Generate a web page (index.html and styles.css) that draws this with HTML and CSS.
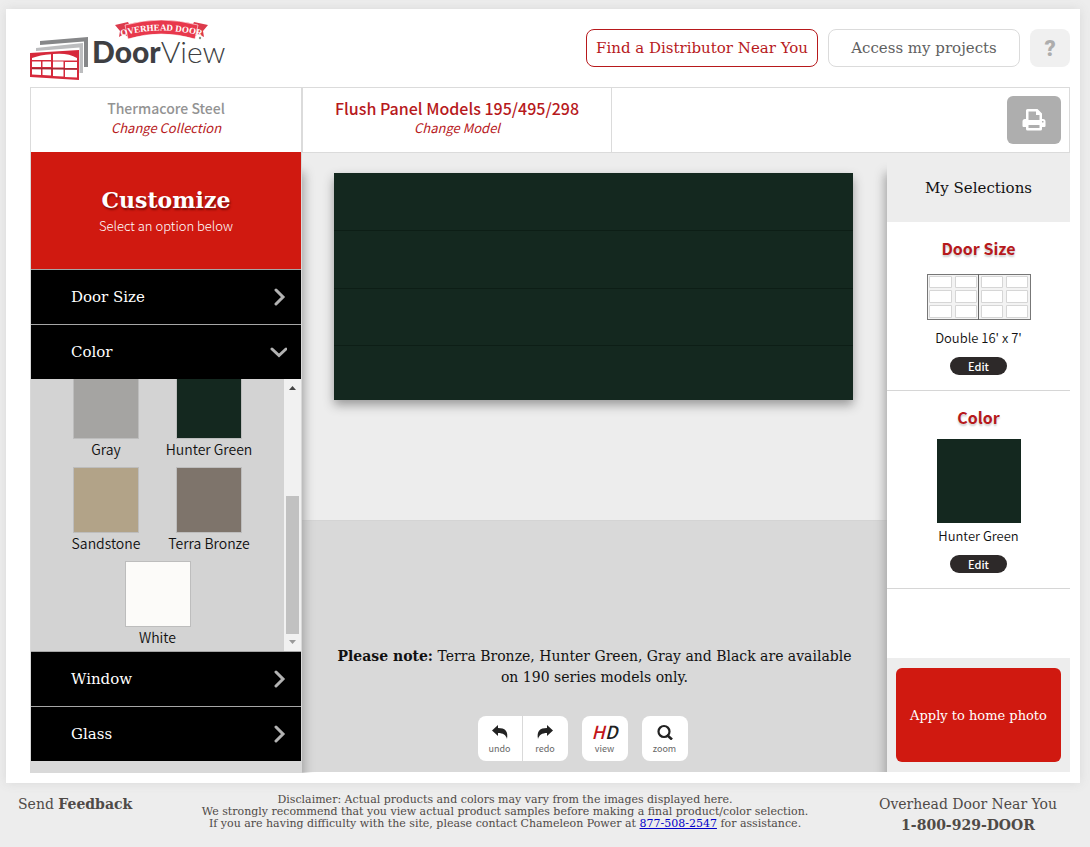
FILE: index.html
```html
<!DOCTYPE html>
<html lang="en">
<head>
<meta charset="utf-8">
<title>DoorView</title>
<link rel="stylesheet" href="styles.css">
</head>
<body>
<div class="shell">
  <header class="header">
    <svg class="logo" width="196" height="64" viewBox="0 0 196 64" role="img" aria-label="Overhead Door DoorView">
      <path d="M10 24 L58 20 V50 H54 V24.500 L10 28Z" fill="#868789"/>
      <path d="M6 31 L53 26 V56 H49.500 V30.500 L6 34Z" fill="#bcbdbf"/>
      <path d="M0 36 L49 33 V63 L0 60Z" fill="#d6293b"/>
      <path d="M2 41 Q10 38 21 37.200 V43 H2Z M23 37 Q38 35.500 47 41 V43.500 H23Z M2 44.500 H11 V50 H2Z M12.500 44.500 H21 V50 H12.500Z M23 44.500 H33.500 V50.500 H23Z M35 45 H47 V51 H35Z M2 52 H11 V58 L2 57.500Z M12.500 52 H21 V58.500 L12.500 58Z M23 52 H33.500 V59.500 L23 59Z M35 52.500 H47 V60.500 L35 60Z" fill="#fff"/>
      <path d="M2 51.500 L47 52" stroke="#a32935" stroke-width="1.500"/>
      <path d="M85 8 L98 5 L101 11 L98 20 L94 17 L89 20 L90 14Z M178 8 L164 5 L161 11 L164 20 L168 17 L174 20 L173 14Z" fill="#dc3b4c"/>
      <path d="M95 8 Q131 -2 168 8 L165 22 Q131 12 98 22Z" fill="#e8384c" stroke="#fff" stroke-width=".6"/>
      <path id="ribbon-line" d="M92 19 Q131 8 171 19" fill="none"/>
      <text class="logo-ribbon"><textPath href="#ribbon-line" startOffset="50%" text-anchor="middle">OVERHEAD DOOR</textPath></text>
      <circle cx="170" cy="21" r="1.200" fill="#8a9a86"/>
      <text x="62" y="46" class="logo-name"><tspan class="logo-door">Door</tspan><tspan>View</tspan></text>
    </svg>
    <nav class="actions">
      <a class="action action-red" href="#">Find a Distributor Near You</a>
      <a class="action action-gray" href="#">Access my projects</a>
      <button class="help" type="button" aria-label="Help">?</button>
    </nav>
  </header>

  <div class="tabs">
    <div class="tab tab-collection"><span class="collection">Thermacore Steel</span><a href="#">Change Collection</a></div>
    <div class="tab tab-model"><span class="model">Flush Panel Models 195/495/298</span><a href="#">Change Model</a></div>
    <div class="tab-tools">
      <button class="print" type="button" aria-label="Print">
        <svg width="24" height="22" viewBox="0 0 24 22"><path fill="#fff" fill-rule="evenodd" d="M4 1.500 Q4 0 5.500 0 H15.500 L20 4.500 V10 H21 Q23.500 10 23.500 12.500 V17 Q23.500 18 22.500 18 H20 V20 Q20 21.500 18.500 21.500 H5.500 Q4 21.500 4 20 V18 H1.500 Q.5 18 .5 17 V12.500 Q.5 10 3 10 H4Z M6.500 2.500 V11 H17.500 V6 H14 V2.500Z M6.500 16 V19 H17.500 V16Z M20 12 V13.500 H21.500 V12Z"/></svg>
      </button>
    </div>
  </div>

  <main class="workspace">
    <aside class="sidebar">
      <div class="intro"><h1>Customize</h1><p>Select an option below</p></div>
      <button class="row" type="button">Door Size<svg width="16" height="18" viewBox="0 0 16 18"><path d="M5 2 L12 9 L5 16"/></svg></button>
      <button class="row" type="button">Color<svg width="18" height="18" viewBox="0 0 18 18"><path d="M3 6 L10 12.500 L17 6"/></svg></button>
      <div class="palette">
        <div class="swatches">
          <button class="swatch" type="button"><span class="chip gray"></span>Gray</button>
          <button class="swatch" type="button"><span class="chip green"></span>Hunter Green</button>
          <button class="swatch" type="button"><span class="chip sand"></span>Sandstone</button>
          <button class="swatch" type="button"><span class="chip bronze"></span>Terra Bronze</button>
          <button class="swatch" type="button"><span class="chip white"></span>White</button>
        </div>
        <div class="scrollbar">
          <svg width="17" height="17" viewBox="0 0 17 17"><path d="M5 11 L8.500 7 L12 11Z" fill="#444"/></svg>
          <span class="thumb"></span>
          <svg width="17" height="17" viewBox="0 0 17 17"><path d="M5 6 L8.500 10 L12 6Z" fill="#999"/></svg>
        </div>
      </div>
      <button class="row" type="button">Window<svg width="16" height="18" viewBox="0 0 16 18"><path d="M5 2 L12 9 L5 16"/></svg></button>
      <button class="row" type="button">Glass<svg width="16" height="18" viewBox="0 0 16 18"><path d="M5 2 L12 9 L5 16"/></svg></button>
    </aside>

    <section class="stage">
      <div class="wall"><div class="door"><span></span><span></span><span></span><span></span></div></div>
      <div class="floor">
        <p class="note"><b>Please note:</b> Terra Bronze, Hunter Green, Gray and Black are available on 190 series models only.</p>
        <div class="tools">
          <div class="tool-pair">
            <button class="tool" type="button"><svg width="18" height="16" viewBox="0 0 18 16"><path fill="#222" d="M1 6.500 L7 1 V4 C14 4 17.500 7 16 15 C15 11 12 9 7 9 V12Z"/></svg>undo</button>
            <button class="tool" type="button"><svg width="18" height="16" viewBox="0 0 18 16"><path fill="#222" d="M17 6.500 L11 1 V4 C4 4 .5 7 2 15 C3 11 6 9 11 9 V12Z"/></svg>redo</button>
          </div>
          <button class="tool" type="button"><span class="hd"><i>H</i>D</span>view</button>
          <button class="tool" type="button"><svg width="18" height="16" viewBox="0 0 18 16"><circle cx="8" cy="7.500" r="5.500" fill="none" stroke="#222" stroke-width="2.200"/><path d="M11 11 L16 15.500" stroke="#222" stroke-width="2.600"/></svg>zoom</button>
        </div>
      </div>
    </section>

    <aside class="selections">
      <h2>My Selections</h2>
      <section class="choice">
        <h3>Door Size</h3>
        <svg class="size-art" width="104" height="48" viewBox="0 0 104 48">
          <rect x=".5" y="1.500" width="103" height="45" fill="#f3f3f3" stroke="#777"/>
          <g fill="#fff" stroke="#d6d6d6">
            <path d="M2.500 3.500h22v11h-22z M28.500 3.500h21v11h-21z M54.500 3.500h21v11h-21z M79.500 3.500h21v11h-21z M2.500 17.500h22v12h-22z M28.500 17.500h21v12h-21z M54.500 17.500h21v12h-21z M79.500 17.500h21v12h-21z M2.500 32.500h22v12h-22z M28.500 32.500h21v12h-21z M54.500 32.500h21v12h-21z M79.500 32.500h21v12h-21z"/>
          </g>
          <path d="M51.500 1 V47" stroke="#666"/>
        </svg>
        <p>Double 16' x 7'</p>
        <button class="edit" type="button">Edit</button>
      </section>
      <section class="choice">
        <h3>Color</h3>
        <div class="color-art green"></div>
        <p>Hunter Green</p>
        <button class="edit" type="button">Edit</button>
      </section>
      <div class="apply-box"><button class="apply" type="button">Apply to home photo</button></div>
    </aside>
  </main>
</div>

<footer class="footer">
  <a class="feedback" href="#">Send <b>Feedback</b></a>
  <p class="disclaimer">Disclaimer: Actual products and colors may vary from the images displayed here.<br>We strongly recommend that you view actual product samples before making a final product/color selection.<br>If you are having difficulty with the site, please contact Chameleon Power at <a href="#">877-508-2547</a> for assistance.</p>
  <p class="contact">Overhead Door Near You<br><b>1-800-929-DOOR</b></p>
</footer>
</body>
</html>
```

FILE: styles.css
```css
* { box-sizing: border-box; }
:root {
  --slab: "Roboto Slab", "DejaVu Serif", serif;
  --sans: "Source Sans Pro", "Noto Sans CJK SC", sans-serif;
  --red: #d01910;
  --text-red: #b7191c;
  --line: #dbdbdb;
}
body { margin: 0; padding: 9px 10px 0 6px; background: #ededed; font-family: var(--sans); font-size: 14px; color: #111; }
h1, h2, h3, p { margin: 0; }
button { border: 0; padding: 0; background: none; font: inherit; color: inherit; cursor: pointer; }
a { text-decoration: none; color: inherit; }
svg { flex: none; display: block; }

.shell { background: #fff; padding: 0 10px 11px 24px; box-shadow: 0 0 10px #d8d8d8; }
.header { display: flex; justify-content: space-between; align-items: flex-start; height: 78px; padding-top: 8px; }
.logo { overflow: visible; }
.logo-ribbon { font: bold 9px "Liberation Serif", serif; fill: #fff; }
.logo-name { font: 300 30px Lato, sans-serif; fill: #3e3f43; }
.logo-door { font-weight: 900; }
.actions { display: flex; gap: 10px; padding-top: 12px; }
.action { display: flex; align-items: center; justify-content: center; height: 38px; border: 1px solid var(--line); border-radius: 8px; font-family: var(--slab); font-size: 15px; white-space: nowrap; }
.action-red { width: 232px; border-color: var(--text-red); color: var(--text-red); }
.action-gray { width: 192px; color: #606060; }
.help { width: 40px; height: 38px; border-radius: 8px; background: #f0f0f0; color: #adadad; font: 900 22px Roboto, sans-serif; }

.tabs { display: grid; grid-template-columns: 272px 309px 1fr; height: 66px; border: 1px solid var(--line); }
.tab { display: flex; flex-direction: column; align-items: center; padding-top: 11px; border-right: 1px solid var(--line); }
.tab-collection { border-right-width: 2px; }
.tab a { font-size: 13px; line-height: 20px; font-style: italic; color: var(--text-red); }
.collection { font-size: 14px; line-height: 19px; font-weight: 500; color: #939393; }
.model { font-size: 16px; line-height: 19px; font-weight: 500; color: var(--text-red); }
.tab-tools { display: flex; justify-content: flex-end; padding: 8px; }
.print { display: flex; align-items: center; justify-content: center; width: 54px; height: 48px; border-radius: 6px; background: #aeaeae; }

.workspace { display: grid; grid-template-columns: 272px 1fr 183px; align-items: start; height: 619px; }
.sidebar { position: relative; z-index: 1; display: flex; flex-direction: column; margin-top: -1px; padding: 0 1px 12px; background: #d9d9d9; box-shadow: 6px 16px 10px -4px #a0a0a0; clip-path: inset(0 -20px 0 0); }
.intro { display: flex; flex-direction: column; align-items: center; height: 117px; padding-top: 31px; background: var(--red); color: #fff; }
.intro h1 { font: bold 22px/34px var(--slab); text-shadow: 1px 2px 2px #7a0d08; }
.intro p { font-size: 13px; line-height: 18px; font-weight: 300; }
.row { display: flex; align-items: center; justify-content: space-between; height: 55px; padding: 0 14px 0 40px; border-top: 1px solid #a6a6a6; background: #000; color: #fff; font-family: var(--slab); font-size: 15px; }
.row path { fill: none; stroke: #b3b3b3; stroke-width: 3; stroke-linecap: round; }
.palette { display: flex; height: 272px; background: #d3d3d3; }
.swatches { flex: 1; display: flex; flex-wrap: wrap; justify-content: center; align-content: flex-end; overflow: hidden; padding-bottom: 3px; }
.swatch { display: flex; flex-direction: column; align-items: center; width: 103px; height: 94px; padding-top: 7px; font-size: 14px; line-height: 20px; font-weight: 350; white-space: nowrap; }
.chip { width: 66px; height: 66px; flex: none; border: 1px solid #bdbdbd; }
.gray { background: #a5a4a2; }
.green { background: #14281f; }
.sand { background: #b2a388; }
.bronze { background: #7e746b; }
.white { background: #fcfbf9; }
.scrollbar { display: flex; flex-direction: column; justify-content: space-between; width: 17px; background: #f1f1f1; }
.thumb { height: 138px; margin: auto 2px 0; background: #c1c1c1; }

.stage { display: grid; grid-template-rows: 367px 1fr; min-width: 0; height: 619px; }
.wall { padding: 20px 34px 0 32px; background: #ededed; }
.door { display: grid; grid-template-rows: 58fr 58fr 57fr 54fr; aspect-ratio: 519 / 227; background: #14281f; box-shadow: 0 5px 10px #999; }
.door span { border-bottom: 1px solid #0d1e16; }
.door span:last-child { border: 0; }
.floor { display: flex; flex-direction: column; justify-content: flex-end; padding: 0 30px 11px; background: #d9d9d9; border-top: 1px solid #d4d4d4; }
.note { text-align: center; font-family: var(--slab); font-size: 14px; line-height: 21px; margin-bottom: 28px; }
.tools { display: flex; justify-content: center; gap: 14px; padding-right: 24px; }
.tool-pair { display: flex; }
.tool { display: flex; flex-direction: column; align-items: center; justify-content: space-between; width: 46px; height: 45px; padding: 8px 0 6px; border-radius: 8px; background: #fff; color: #666; font-size: 9px; line-height: 12px; }
.tool-pair .tool { width: 45px; }
.tool-pair .tool:first-child { border-radius: 8px 0 0 8px; border-right: 1px solid #d9d9d9; }
.tool-pair .tool:last-child { border-radius: 0 8px 8px 0; }
.hd { font-size: 18px; line-height: 14px; font-weight: 500; font-style: italic; color: #222; }
.hd i { color: #c3151a; }

.selections { position: relative; display: flex; flex-direction: column; height: 619px; background: #fff; box-shadow: -6px 16px 10px -4px #a0a0a0; clip-path: inset(0 0 0 -20px); }
.selections h2 { height: 69px; padding-top: 23px; background: #ededed; text-align: center; font: normal 15px/24px var(--slab); }
.choice { display: flex; flex-direction: column; align-items: center; padding: 14px 0 15px; border-bottom: 1px solid #d6d6d6; }
.choice h3 { font-size: 16px; line-height: 24px; font-weight: 700; color: var(--text-red); text-shadow: 0 2px 2px #ccc; }
.size-art { margin-top: 13px; }
.color-art { width: 84px; height: 84px; margin-top: 10px; }
.choice p { margin-top: 8px; font-size: 13px; line-height: 18px; font-weight: 350; }
.color-art + p { margin-top: 4px; }
.edit { width: 57px; height: 18px; margin-top: 10px; border-radius: 9px; background: #2d2929; color: #fff; font-size: 11px; line-height: 18px; font-weight: 500; }
.apply-box { margin-top: auto; padding: 10px 9px; background: #ededed; }
.apply { width: 100%; height: 94px; border-radius: 6px; background: var(--red); color: #fff; font-family: var(--slab); font-size: 13px; }

.footer { display: grid; grid-template-columns: 116px 1fr 184px; padding: 11px 20px 10px 12px; font-family: var(--slab); font-size: 14px; line-height: 21px; color: #4f4a47; }
.disclaimer { text-align: center; font-size: 11px; line-height: 12px; white-space: nowrap; }
.disclaimer a { color: #0000c8; text-decoration: underline; }
.contact { text-align: center; }
```
